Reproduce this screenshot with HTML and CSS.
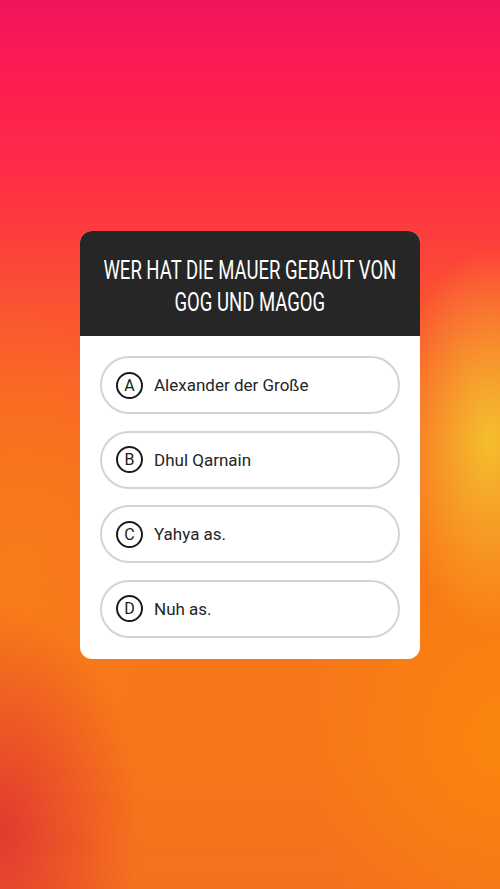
FILE: index.html
```html
<!DOCTYPE html>
<html lang="de">
<head>
    <meta charset="UTF-8">
    <meta name="viewport" content="width=device-width, initial-scale=1.0">
    <title>Quiz</title>
    <link rel="stylesheet" href="styles.css">
</head>
<body>
    <div class="story">
        <div class="quiz">
            <div class="quiz-title">
                <span class="title-line">WER HAT DIE MAUER GEBAUT VON</span>
                <span class="title-line">GOG UND MAGOG</span>
            </div>
            <div class="quiz-options">
                <div class="option"><span class="letter">A</span>Alexander der Große</div>
                <div class="option"><span class="letter">B</span>Dhul Qarnain</div>
                <div class="option"><span class="letter">C</span>Yahya as.</div>
                <div class="option"><span class="letter">D</span>Nuh as.</div>
            </div>
        </div>
    </div>
</body>
</html>
```

FILE: styles.css
```css
html, body {
    margin: 0;
    padding: 0;
}
body {
    font-family: Roboto, "Noto Sans", sans-serif;
}
.story {
    width: 500px;
    height: 889px;
    box-sizing: border-box;
    padding-top: 231px;
    background:
        radial-gradient(ellipse 100px 190px at 490px 440px, rgba(244, 196, 46, 0.95), rgba(244, 196, 46, 0) 100%),
        radial-gradient(ellipse 140px 220px at 0px 830px, rgba(222, 48, 52, 0.85), rgba(222, 48, 52, 0) 100%),
        radial-gradient(ellipse 200px 260px at 500px 740px, rgba(252, 136, 10, 0.8), rgba(252, 136, 10, 0) 100%),
        radial-gradient(ellipse 160px 260px at 20px 560px, rgba(248, 126, 24, 0.7), rgba(248, 126, 24, 0) 100%),
        linear-gradient(180deg, #ef145c 0%, #fd1b52 8%, #ff2a48 18%, #fd3c3c 26%, #fb5232 34%, #fa6428 44%, #f9711e 56%, #f8761a 70%, #f7761a 85%, #f4701e 100%);
}
.quiz {
    width: 340px;
    margin: 0 auto;
    border-radius: 12px;
    overflow: hidden;
    background: #fff;
}
.quiz-title {
    background: #262626;
    color: #fff;
    display: flex;
    flex-direction: column;
    align-items: center;
    font-size: 25px;
    line-height: 32px;
    padding: 24px 0 17px;
}
.title-line {
    white-space: nowrap;
    transform: scaleX(0.74);
}
.quiz-options {
    display: flex;
    flex-direction: column;
    gap: 16.5px;
    padding: 20px 20px 21px;
}
.option {
    display: flex;
    align-items: center;
    height: 58px;
    box-sizing: border-box;
    border: 2px solid #d4d4d4;
    border-radius: 29px;
    padding-left: 14px;
    font-size: 17px;
    color: #262626;
}
.letter {
    width: 27px;
    height: 27px;
    box-sizing: border-box;
    border: 2px solid #1a1a1a;
    border-radius: 50%;
    display: flex;
    align-items: center;
    justify-content: center;
    font-size: 16px;
    color: #1a1a1a;
    margin-right: 11px;
}
```
